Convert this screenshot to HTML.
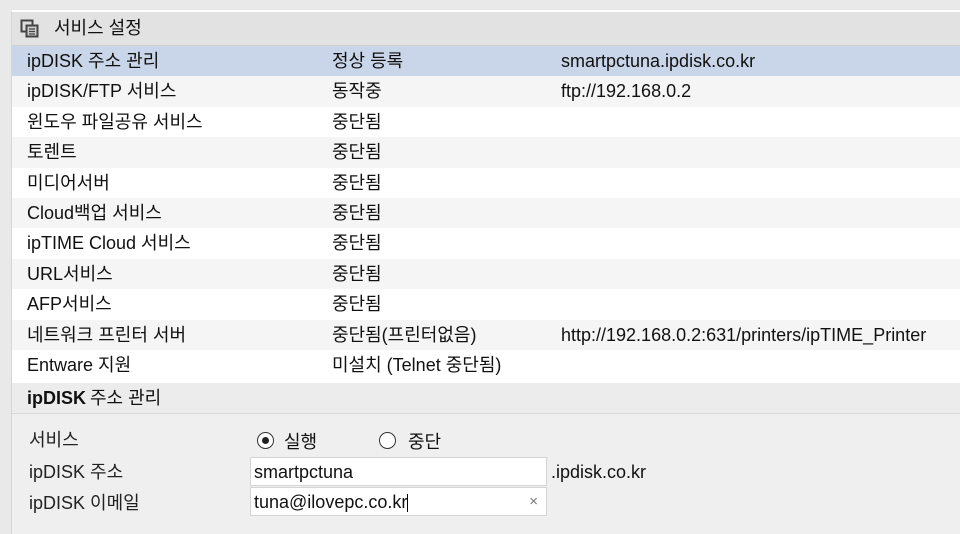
<!DOCTYPE html>
<html><head><meta charset="utf-8"><style>
*{margin:0;padding:0;box-sizing:border-box}
body{width:960px;height:534px;overflow:hidden;background:#e9e9e9;font-family:"Liberation Sans","Noto Sans CJK KR",sans-serif;font-size:18px;line-height:20px;color:#111;position:relative}
.panel{position:absolute;left:11px;top:10px;width:949px;height:524px;background:#efefef;border-left:1px solid #d6d6d6;border-top:2px solid #fff}
.hdr{position:absolute;left:0;top:0;width:100%;height:34px;background:#e2e2e2;border-bottom:1px solid #d0d0d0}
.hdr span{position:absolute;left:42px;top:6px;line-height:20px}
.row{position:absolute;left:0;width:100%;height:30.4px}
.row span{position:absolute;top:5px;line-height:20px}
.c1{left:15px}.c2{left:320px}.c3{left:549px}
.sec{position:absolute;left:0;top:371px;width:100%;height:31px;background:#ececec;border-bottom:1px solid #d8d8d8}
.sec b,.sec span{position:absolute;top:5px;line-height:20px}
.sec b{left:15px}
.lbl{position:absolute;left:17px;color:#222;line-height:20px}
.inp{position:absolute;left:238px;width:297px;height:29px;background:#fff;border:1px solid #d4d4d4;padding-left:3px;padding-top:4px;line-height:20px}
.rad{position:absolute;width:17px;height:17px;border:1.5px solid #333;border-radius:50%;background:#fff}
</style></head><body>
<div class="panel">
<div class="hdr">
<svg style="position:absolute;left:8px;top:7px" width="20" height="20" viewBox="0 0 20 20"><rect x="1.5" y="1.5" width="11" height="11" fill="#ddd" stroke="#444" stroke-width="2"/><rect x="6.5" y="6.5" width="11" height="11" fill="#ccc" stroke="#444" stroke-width="2"/><path d="M9 10h6M9 12.5h6M9 15h6" stroke="#444" stroke-width="1.2"/></svg>
<span>서비스 설정</span></div>
<div class="row" style="top:34px;background:#c9d5e8"><span class="c1">ipDISK 주소 관리</span><span class="c2">정상 등록</span><span class="c3">smartpctuna.ipdisk.co.kr</span></div>
<div class="row" style="top:64.4px;background:#f5f5f5"><span class="c1">ipDISK/FTP 서비스</span><span class="c2">동작중</span><span class="c3">ftp://192.168.0.2</span></div>
<div class="row" style="top:94.8px;background:#fff"><span class="c1">윈도우 파일공유 서비스</span><span class="c2">중단됨</span></div>
<div class="row" style="top:125.2px;background:#f5f5f5"><span class="c1">토렌트</span><span class="c2">중단됨</span></div>
<div class="row" style="top:155.6px;background:#fff"><span class="c1">미디어서버</span><span class="c2">중단됨</span></div>
<div class="row" style="top:186px;background:#f5f5f5"><span class="c1">Cloud백업 서비스</span><span class="c2">중단됨</span></div>
<div class="row" style="top:216.4px;background:#fff"><span class="c1">ipTIME Cloud 서비스</span><span class="c2">중단됨</span></div>
<div class="row" style="top:246.8px;background:#f5f5f5"><span class="c1">URL서비스</span><span class="c2">중단됨</span></div>
<div class="row" style="top:277.2px;background:#fff"><span class="c1">AFP서비스</span><span class="c2">중단됨</span></div>
<div class="row" style="top:307.6px;background:#f5f5f5"><span class="c1">네트워크 프린터 서버</span><span class="c2">중단됨(프린터없음)</span><span class="c3">http://192.168.0.2:631/printers/ipTIME_Printer</span></div>
<div class="row" style="top:338px;background:#fff;height:33px"><span class="c1">Entware 지원</span><span class="c2">미설치 (Telnet 중단됨)</span></div>
<div class="sec"><b>ipDISK</b><span style="left:78px">주소 관리</span></div>
<span class="lbl" style="top:418px">서비스</span>
<div class="rad" style="left:245px;top:420px"><div style="position:absolute;left:3.5px;top:3.5px;width:7px;height:7px;border-radius:50%;background:#222"></div></div>
<span style="position:absolute;left:272px;top:420px">실행</span>
<div class="rad" style="left:367px;top:420px"></div>
<span style="position:absolute;left:396px;top:420px">중단</span>
<span class="lbl" style="top:450px">ipDISK 주소</span>
<div class="inp" style="top:445px">smartpctuna</div>
<span style="position:absolute;left:539px;top:450px">.ipdisk.co.kr</span>
<span class="lbl" style="top:481px">ipDISK 이메일</span>
<div class="inp" style="top:475px">tuna@ilovepc.co.kr<span style="display:inline-block;width:1px;height:18px;background:#000;vertical-align:middle"></span><span style="position:absolute;right:8px;top:4px;color:#777;font-size:15px">×</span></div>
</div>
</body></html>
